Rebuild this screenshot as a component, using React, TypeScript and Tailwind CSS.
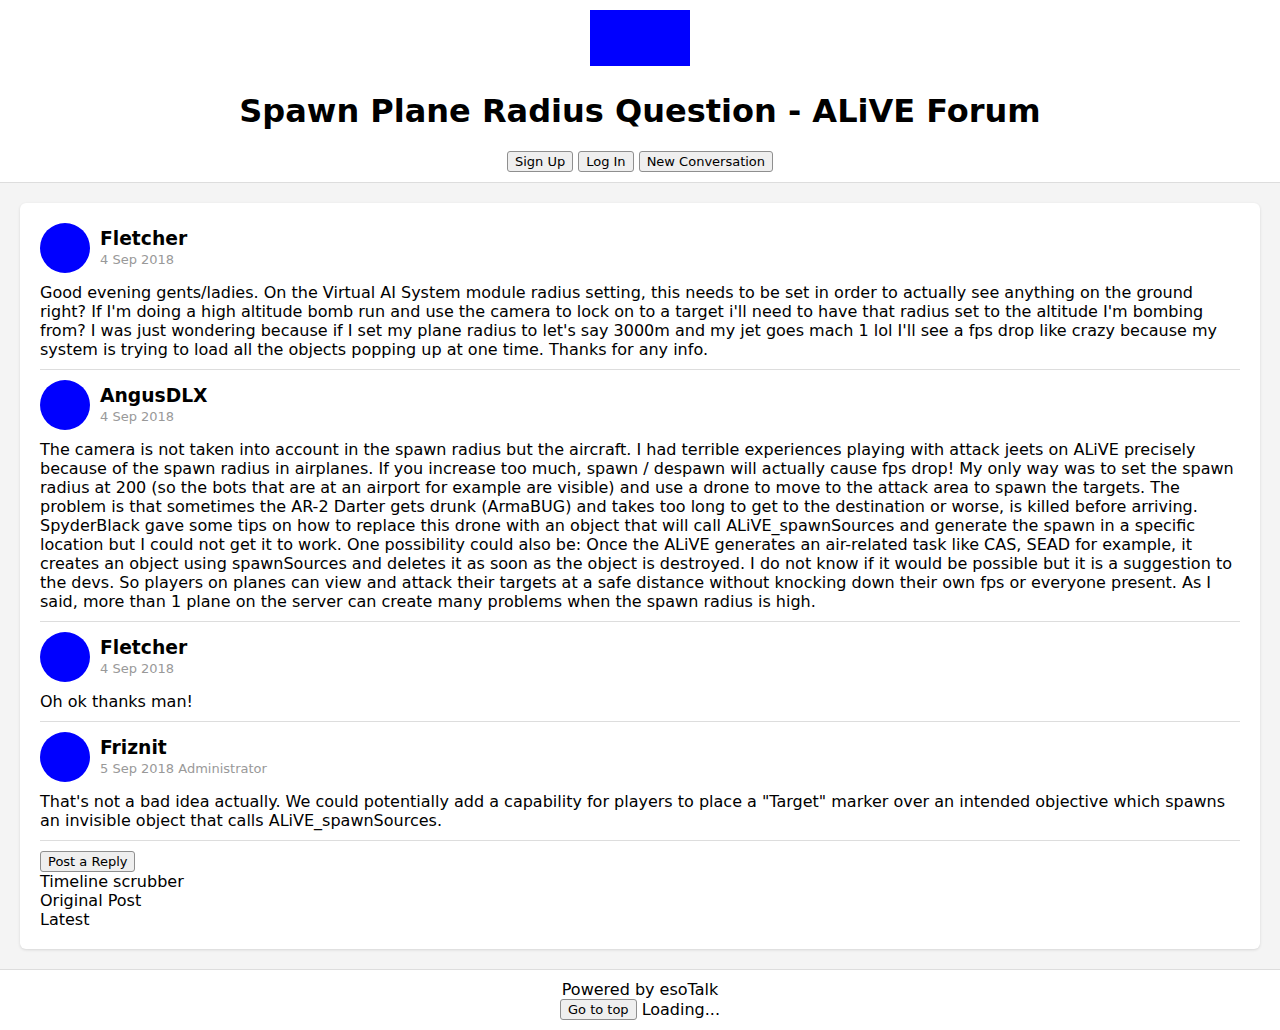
import React from 'react';

type Post = {
  name: string;
  date: string;
  role?: string;
  body: string;
};

const posts: Post[] = [
  {
    name: 'Fletcher',
    date: '4 Sep 2018',
    body: "Good evening gents/ladies. On the Virtual AI System module radius setting, this needs to be set in order to actually see anything on the ground right? If I'm doing a high altitude bomb run and use the camera to lock on to a target i'll need to have that radius set to the altitude I'm bombing from? I was just wondering because if I set my plane radius to let's say 3000m and my jet goes mach 1 lol I'll see a fps drop like crazy because my system is trying to load all the objects popping up at one time. Thanks for any info.",
  },
  {
    name: 'AngusDLX',
    date: '4 Sep 2018',
    body: 'The camera is not taken into account in the spawn radius but the aircraft. I had terrible experiences playing with attack jeets on ALiVE precisely because of the spawn radius in airplanes. If you increase too much, spawn / despawn will actually cause fps drop! My only way was to set the spawn radius at 200 (so the bots that are at an airport for example are visible) and use a drone to move to the attack area to spawn the targets. The problem is that sometimes the AR-2 Darter gets drunk (ArmaBUG) and takes too long to get to the destination or worse, is killed before arriving. SpyderBlack gave some tips on how to replace this drone with an object that will call ALiVE_spawnSources and generate the spawn in a specific location but I could not get it to work. One possibility could also be: Once the ALiVE generates an air-related task like CAS, SEAD for example, it creates an object using spawnSources and deletes it as soon as the object is destroyed. I do not know if it would be possible but it is a suggestion to the devs. So players on planes can view and attack their targets at a safe distance without knocking down their own fps or everyone present. As I said, more than 1 plane on the server can create many problems when the spawn radius is high.',
  },
  {
    name: 'Fletcher',
    date: '4 Sep 2018',
    body: 'Oh ok thanks man!',
  },
  {
    name: 'Friznit',
    date: '5 Sep 2018',
    role: 'Administrator',
    body: 'That\'s not a bad idea actually. We could potentially add a capability for players to place a "Target" marker over an intended objective which spawns an invisible object that calls ALiVE_spawnSources.',
  },
];

const btn =
  'bg-[#efefef] border border-[#8f8f8f] rounded-[3px] px-[7px] py-[2px] text-[13px] leading-[15px] text-black';

const App: React.FC = () => {
  return (
    <div className="min-h-screen bg-white font-['DejaVu_Sans',sans-serif] text-black">
      <header className="bg-white border-b border-[#ddd] pt-[10px] pb-[10px] flex flex-col items-center">
        <div className="w-[100px] h-[56px] bg-[#0000ff]"></div>
        <h1 className="mt-[27px] text-[32px] font-bold leading-[37px]">
          Spawn Plane Radius Question - ALiVE Forum
        </h1>
        <div className="mt-[21px] flex gap-[5px] justify-center">
          <button className={btn}>Sign Up</button>
          <button className={btn}>Log In</button>
          <button className={btn}>New Conversation</button>
        </div>
      </header>

      <main className="bg-[#f4f4f4] p-[20px]">
        <div className="bg-white rounded-md shadow-[0_1px_3px_rgba(0,0,0,0.12)] p-[20px]">
          {posts.map((post, index) => (
            <div key={index} className="border-b border-[#ddd] pb-[10px] mb-[10px]">
              <div className="flex items-start gap-[10px]">
                <div className="w-[50px] h-[50px] rounded-full bg-[#0000ff] shrink-0"></div>
                <div className="mt-[5px]">
                  <div className="text-[18.72px] font-bold leading-[22px]">{post.name}</div>
                  <div className="mt-[2px] text-[13px] leading-[15px] text-[#999]">
                    {post.date}
                    {post.role && <span> {post.role}</span>}
                  </div>
                </div>
              </div>
              <p className="mt-[10px] text-[16px] leading-[19px]">{post.body}</p>
            </div>
          ))}
          <div className="flex">
            <button className={btn}>Post a Reply</button>
          </div>
          <div className="text-[16px] leading-[19px]">
            <div>Timeline scrubber</div>
            <div>Original Post</div>
            <div>Latest</div>
          </div>
        </div>
      </main>

      <footer className="border-t border-[#ddd] bg-white pt-[10px] pb-[10px] text-center text-[16px] leading-[19px]">
        <div>Powered by esoTalk</div>
        <div className="flex justify-center items-center gap-[5px]">
          <button className={btn}>Go to top</button>
          <span>Loading...</span>
        </div>
      </footer>
    </div>
  );
};

export default App;
